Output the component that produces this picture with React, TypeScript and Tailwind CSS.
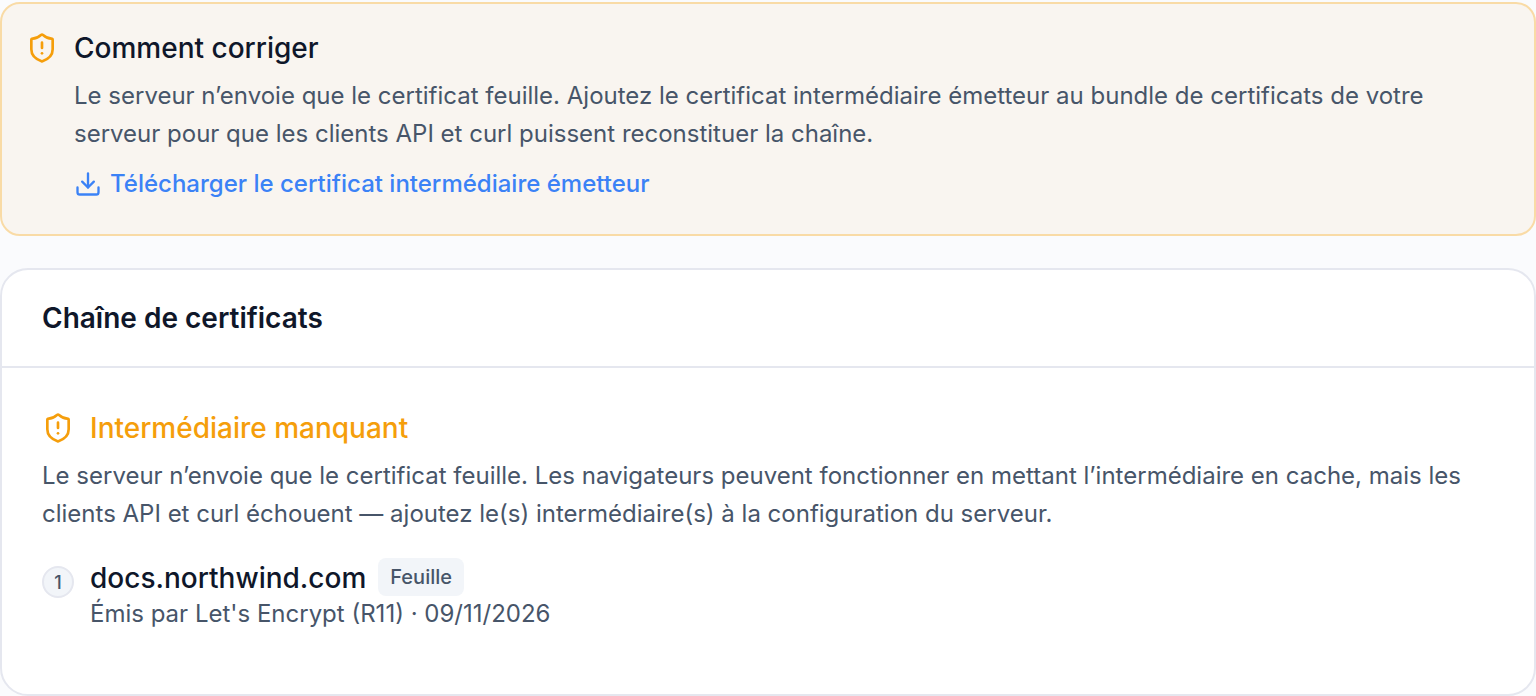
import { Download, ShieldAlert } from "lucide-react";

const chain = [
  { name: "docs.northwind.com", kind: "Feuille", issuer: "Let's Encrypt (R11)", expires: "09/11/2026" },
];

function FixCard() {
  return (
    <section className="flex h-[234px] gap-4 rounded-[20px] border-2 border-[#f9dba6] bg-[#f9f5f0] px-6 pt-6">
      <ShieldAlert className="mt-1 size-8 shrink-0 text-[#f59e0b]" />
      <div>
        <h2 className="text-[28px] leading-10 font-medium text-[#0f172a]">Comment corriger</h2>
        <p className="mt-[9px] text-[24px] leading-[38px] text-[#475569]">
          Le serveur n’envoie que le certificat feuille. Ajoutez le certificat intermédiaire émetteur au bundle de certificats de votre
          <br />
          serveur pour que les clients API et curl puissent reconstituer la chaîne.
        </p>
        <a href="#" className="mt-[15px] flex items-center gap-2 text-[24px] leading-8 font-medium text-[#3b82f6]">
          <Download className="size-7" />
          Télécharger le certificat intermédiaire émetteur
        </a>
      </div>
    </section>
  );
}

function ChainCard() {
  return (
    <section className="mt-8 h-[428px] rounded-[28px] border-2 border-[#e5e7ef] bg-white">
      <header className="flex h-[98px] items-center border-b-2 border-[#e5e7ef] px-10">
        <h2 className="text-[28px] leading-10 font-semibold text-[#0f172a]">Chaîne de certificats</h2>
      </header>
      <div className="px-10 pt-10">
        <div className="flex items-center gap-4 text-[#f59e0b]">
          <ShieldAlert className="size-8" />
          <h3 className="text-[28px] leading-10 font-medium">Intermédiaire manquant</h3>
        </div>
        <p className="mt-[9px] text-[24px] leading-[38px] text-[#475569]">
          Le serveur n’envoie que le certificat feuille. Les navigateurs peuvent fonctionner en mettant l’intermédiaire en cache, mais les
          <br />
          clients API et curl échouent — ajoutez le(s) intermédiaire(s) à la configuration du serveur.
        </p>
        <ol className="mt-[25px]">
          {chain.map((cert, i) => (
            <li key={cert.name} className="flex gap-4">
              <span className="mt-2 flex size-8 shrink-0 items-center justify-center rounded-full border-2 border-[#e5e7ef] bg-[#f2f5f9] text-[18px] font-medium text-[#475569]">
                {i + 1}
              </span>
              <div>
                <div className="flex items-start gap-3">
                  <span className="text-[28px] leading-10 font-medium text-[#0f172a]">{cert.name}</span>
                  <span className="rounded-lg bg-[#f2f5f9] px-3 py-1 text-[20px] leading-[30px] font-medium text-[#475569]">
                    {cert.kind}
                  </span>
                </div>
                <p className="text-[24px] leading-8 text-[#475569]">
                  Émis par {cert.issuer} · {cert.expires}
                </p>
              </div>
            </li>
          ))}
        </ol>
      </div>
    </section>
  );
}

export default function App() {
  return (
    <main className="h-[696px] overflow-hidden bg-[#fafbfd] pt-0.5 font-['Inter',sans-serif] antialiased">
      <FixCard />
      <ChainCard />
    </main>
  );
}
